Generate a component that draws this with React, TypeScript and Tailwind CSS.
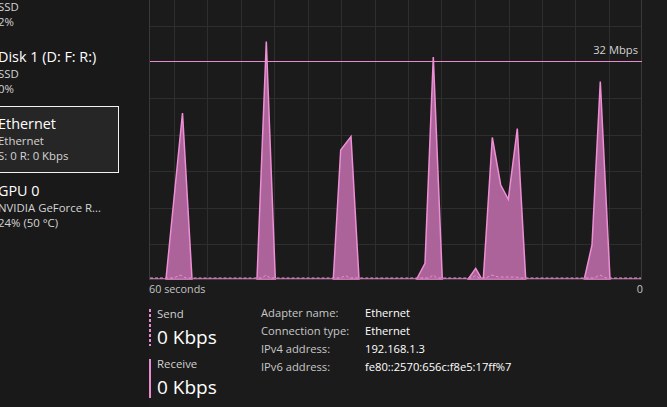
import React from "react";

type Item = { title: string; sub: string; val: string; selected?: boolean };

const items: Item[] = [
  { title: "Disk 0 (C:)", sub: "SSD", val: "2%" },
  { title: "Disk 1 (D: F: R:)", sub: "SSD", val: "0%" },
  { title: "Ethernet", sub: "Ethernet", val: "S: 0 R: 0 Kbps", selected: true },
  { title: "GPU 0", sub: "NVIDIA GeForce R...", val: "24% (50 °C)" },
];

const vLines = [174, 207, 241, 274, 308, 341, 375, 408, 441, 475, 509, 542, 575, 609];
const hLines = [26, 98, 135, 171, 208, 244];

const spikes = [
  "166,279 182.5,113 192,279",
  "257,279 266.3,41.5 275.3,279",
  "333.3,279 340.7,150 351,136.5 359,279",
  "416.7,279 425,263.3 433.3,57 442.3,279",
  "468.3,279 475.7,268.3 481.7,279",
  "483.3,279 492.3,137.5 500.7,185 508.3,199.3 517.3,128.5 525.7,279",
  "584.3,279 592,245 600.3,81.5 610,279",
];

const sendLine =
  "150,278 174,278 180,275 186,278 262,278 266,275 270,278 341,278 345,275.5 350,278 429,278 433,275 437,278 472,278 475.5,275.5 479,278 486,278 492,275 498,277 516,277 520,278 594,278 600,275 606,278 641,278";

function Chart() {
  return (
    <div className="relative h-[280px] w-[493px] bg-[#1b1b1b]">
      <svg width={493} height={280} viewBox="149 0 493 280" className="block">
        {vLines.map((x) => (
          <line key={x} x1={x + 0.5} y1={0} x2={x + 0.5} y2={279} stroke="#2e2e2e" strokeWidth={1} />
        ))}
        {hLines.map((y) => (
          <line key={y} x1={150} y1={y + 0.5} x2={641} y2={y + 0.5} stroke="#2e2e2e" strokeWidth={1} />
        ))}
        <line x1={149.5} y1={0} x2={149.5} y2={280} stroke="#3a3a3a" strokeWidth={1} />
        <line x1={641.5} y1={0} x2={641.5} y2={280} stroke="#3a3a3a" strokeWidth={1} />
        <line x1={149} y1={279.5} x2={642} y2={279.5} stroke="#3a3a3a" strokeWidth={1} />
        <line x1={150} y1={61.5} x2={642} y2={61.5} stroke="#e88bd0" strokeWidth={1} />
        {spikes.map((p, i) => (
          <polygon
            key={i}
            points={p}
            fill="#ab639a"
            stroke="#ee8ed4"
            strokeWidth={1.5}
            strokeLinejoin="miter"
          />
        ))}
        <line x1={150} y1={278.6} x2={641} y2={278.6} stroke="#b86aa5" strokeWidth={1} />
        <polyline points={sendLine} fill="none" stroke="#ee8ed4" strokeWidth={1} strokeDasharray="3 2" />
      </svg>
      <div className="absolute right-[4px] top-[43px] text-[11.2px] leading-[14px] text-[#d2d2d2]">32 Mbps</div>
    </div>
  );
}

export default function App() {
  return (
    <div className="flex h-[407px] w-[667px] overflow-hidden bg-[#1b1b1b] font-['Open_Sans',sans-serif]">
      <div className="h-full w-[149px] shrink-0 overflow-hidden bg-[#191919]">
        <div className="-ml-[62px] -mt-[28px] flex flex-col">
          {items.map((it) => (
            <div
              key={it.title}
              className={
                it.selected
                  ? "box-border h-[67px] w-[181px] border border-[#f2f2f2] bg-[#262626] pl-[59px] pt-[7px]"
                  : "box-border h-[67px] w-[181px] border border-transparent pl-[59px] pt-[7px]"
              }
            >
              <div className="whitespace-nowrap text-[14.4px] leading-[19px] text-white">{it.title}</div>
              <div className="whitespace-nowrap text-[11.4px] leading-[15px] text-[#d4d4d4]">{it.sub}</div>
              <div className="whitespace-nowrap text-[11.4px] leading-[15px] text-[#d4d4d4]">{it.val}</div>
            </div>
          ))}
        </div>
      </div>
      <div className="flex flex-1 flex-col">
        <Chart />
        <div className="mt-[2px] flex w-[494px] justify-between text-[10.8px] leading-[14px] text-[#c4c4c4]">
          <span>60 seconds</span>
          <span>0</span>
        </div>
        <div className="flex items-start pt-[8px]">
          <div className="mt-[3px] flex w-[112px] shrink-0 flex-col">
            <div className="flex items-start">
              <div className="mt-[2px] h-[37px] w-[2px] shrink-0 bg-[repeating-linear-gradient(to_bottom,#e88bd0_0px,#e88bd0_3px,transparent_3px,transparent_5px)]" />
              <div className="ml-[6px] flex flex-col">
                <span className="text-[11.4px] leading-[13px] text-[#d0d0d0]">Send</span>
                <span className="mt-[3px] whitespace-nowrap text-[19px] leading-[28px] text-white">0 Kbps</span>
              </div>
            </div>
            <div className="mt-[6px] flex items-start">
              <div className="mt-[2px] h-[39px] w-[2px] shrink-0 bg-[#e88bd0]" />
              <div className="ml-[6px] flex flex-col">
                <span className="text-[11.4px] leading-[13px] text-[#d0d0d0]">Receive</span>
                <span className="mt-[3px] whitespace-nowrap text-[19px] leading-[28px] text-white">0 Kbps</span>
              </div>
            </div>
          </div>
          <div className="grid grid-cols-[104px_auto] content-start self-start text-[11.2px] leading-[18px]">
            <span className="text-[#c8c8c8]">Adapter name:</span>
            <span className="text-white">Ethernet</span>
            <span className="text-[#c8c8c8]">Connection type:</span>
            <span className="text-white">Ethernet</span>
            <span className="text-[#c8c8c8]">IPv4 address:</span>
            <span className="text-white">192.168.1.3</span>
            <span className="text-[#c8c8c8]">IPv6 address:</span>
            <span className="text-white">fe80::2570:656c:f8e5:17ff%7</span>
          </div>
        </div>
      </div>
    </div>
  );
}
